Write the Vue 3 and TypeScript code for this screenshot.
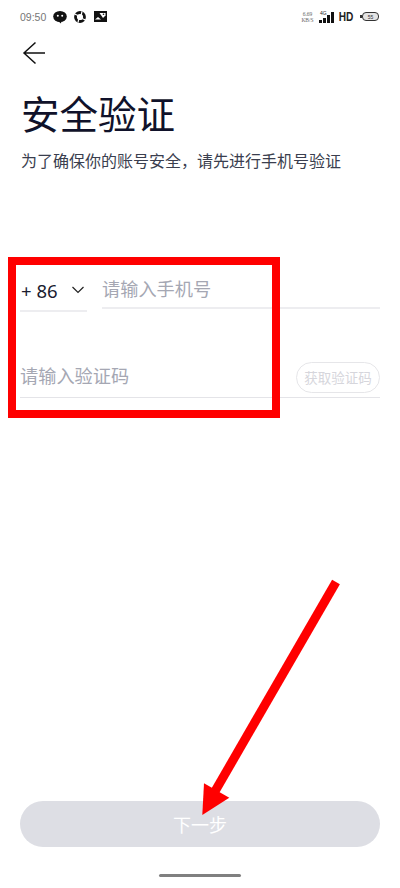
<script setup lang="ts">
const title = '安全验证'
const subtitle = '为了确保你的账号安全，请先进行手机号验证'
const bars = [3, 5, 8, 11]
</script>

<template>
  <div class="page">
    <div class="status-bar">
      <div class="status-left">
        <span class="time">09:50</span>
        <svg class="st-icon" width="14" height="14" viewBox="0 0 14 14">
          <ellipse cx="7" cy="6.5" rx="6.8" ry="5.6" fill="#111" />
          <path d="M5 11l3 2.600 .4-2.600z" fill="#111" />
          <circle cx="4.800" cy="5.800" r="1" fill="#fff" />
          <circle cx="9.200" cy="5.800" r="1" fill="#fff" />
        </svg>
        <svg class="st-icon disc" width="12" height="12" viewBox="0 0 12 12">
          <circle cx="6" cy="6" r="4.500" fill="none" stroke="#111" stroke-width="2.800" />
          <path d="M.5 3l3.500 1.500M8 .5L7.200 4M11.500 9L8 7.500M4 11.500L4.800 8" stroke="#fff" stroke-width="1.200" />
        </svg>
        <svg class="st-icon" width="13" height="11" viewBox="0 0 13 11">
          <rect width="13" height="11" fill="#111" />
          <path d="M1 8.500l3-2.500 3 2.500z" fill="#fff" />
          <path d="M5.500 2h6v2.500L9 7z" fill="#fff" />
          <circle cx="9.500" cy="3.200" r=".8" fill="#111" />
        </svg>
      </div>
      <div class="status-right">
        <span class="speed"><i>6.69</i><i>KB/S</i></span>
        <span class="signal">
          <small>4G</small>
          <b v-for="h in bars" :key="h" :style="{ height: `${h}px` }"></b>
        </span>
        <span class="hd">HD</span>
        <span class="battery"><em>55</em></span>
      </div>
    </div>

    <button class="back" type="button" aria-label="返回">
      <svg width="24" height="24" viewBox="0 0 24 24" fill="none" stroke="#111" stroke-width="1.500">
        <path d="M23 12H2M13.500 1.500L2 12l11.500 10.500" />
      </svg>
    </button>

    <h1 class="title">{{ title }}</h1>
    <p class="subtitle">{{ subtitle }}</p>

    <div class="form">
      <div class="phone-row">
        <div class="code-select">
          <span>+ 86</span>
          <svg width="14" height="8" viewBox="0 0 14 8" fill="none" stroke="#222" stroke-width="1.200">
            <path d="M1.500 1l5.500 5.500L12.500 1" />
          </svg>
        </div>
        <div class="field">请输入手机号</div>
      </div>
      <div class="sms-row">
        <span class="field-text">请输入验证码</span>
        <span class="sms-btn">获取验证码</span>
      </div>
    </div>

    <button class="next" type="button">下一步</button>
    <div class="home-bar"></div>

    <div class="mark-box"></div>
    <svg class="mark-arrow" width="400" height="888" viewBox="0 0 400 888">
      <path d="M336 582L214 793" stroke="#f00" stroke-width="9" fill="none" />
      <path d="M202.300 815L204 783.300L229.300 797.700z" fill="#f00" />
    </svg>
  </div>
</template>

<style scoped>
.page {
  position: relative;
  width: 400px;
  height: 888px;
  overflow: hidden;
  box-sizing: border-box;
  display: flex;
  flex-direction: column;
  background: #fff;
  font-family: "Noto Sans CJK SC", "Liberation Sans", sans-serif;
}

.status-bar {
  height: 32px;
  padding: 1px 21px 0 20px;
  box-sizing: border-box;
  display: flex;
  align-items: center;
  justify-content: space-between;
}

.status-left {
  display: flex;
  align-items: center;
}

.time {
  font-family: "Liberation Sans", sans-serif;
  font-size: 10.500px;
  color: #777;
  margin-right: 7px;
}

.st-icon {
  margin-right: 7px;
}

.st-icon.disc {
  margin-right: 8px;
}

.status-right {
  display: flex;
  align-items: center;
  gap: 6px;
}

.speed {
  display: flex;
  flex-direction: column;
  align-items: center;
  width: 11px;
  font-family: "Liberation Serif", serif;
  font-size: 5.500px;
  line-height: 6px;
  white-space: nowrap;
  color: #666;
}

.speed i {
  font-style: normal;
}

.signal {
  position: relative;
  display: flex;
  align-items: flex-end;
  gap: 1px;
  height: 11px;
  margin-top: 1px;
}

.signal small {
  position: absolute;
  left: 1px;
  top: -2px;
  font-size: 5px;
  line-height: 6px;
  color: #222;
  font-family: "Liberation Sans", sans-serif;
}

.signal b {
  width: 3px;
  background: #111;
}

.hd {
  width: 12px;
  margin-right: 4px;
  display: flex;
  justify-content: center;
  font-family: "Liberation Sans", sans-serif;
  font-size: 13px;
  font-weight: 700;
  color: #222;
  transform: scaleX(0.78);
}

.battery {
  position: relative;
  width: 17px;
  height: 9px;
  box-sizing: border-box;
  border: 1px solid #333;
  border-radius: 4px;
  background: #e4e4e4;
  display: flex;
  align-items: center;
  justify-content: center;
}

.battery::before {
  content: "";
  position: absolute;
  left: -3px;
  top: 2px;
  width: 2px;
  height: 3px;
  background: #333;
}

.battery em {
  font-style: normal;
  font-size: 5px;
  color: #333;
  font-family: "Liberation Sans", sans-serif;
}

.back {
  align-self: flex-start;
  margin: 9px 0 0 22px;
  padding: 0;
  width: 24px;
  height: 24px;
  border: none;
  background: none;
  display: block;
}

.title {
  margin: 21px 0 0 21px;
  font-size: 38.500px;
  line-height: 52px;
  font-weight: 400;
  color: #10122a;
}

.subtitle {
  margin: 10px 0 0 21px;
  font-size: 16px;
  line-height: 24px;
  color: #3a3e4e;
}

.form {
  margin: 98px 20px 0;
}

.phone-row {
  display: flex;
  gap: 15px;
}

.code-select {
  width: 67px;
  height: 42px;
  box-sizing: border-box;
  border-bottom: 2px solid #ededf0;
  display: flex;
  align-items: center;
  justify-content: space-between;
  padding: 0 2px 0 1px;
  color: #1a1c30;
  font-size: 18.500px;
  font-family: "Noto Sans", "Liberation Sans", sans-serif;
}

.field {
  flex: 1;
  height: 39px;
  box-sizing: border-box;
  border-bottom: 2px solid #ededf0;
  font-size: 18.200px;
  line-height: 37px;
  color: #a5a7b3;
}

.sms-row {
  margin-top: 45px;
  height: 41px;
  box-sizing: border-box;
  border-bottom: 1px solid #e4e4e8;
  display: flex;
  align-items: flex-start;
  justify-content: space-between;
}

.field-text {
  font-size: 18.200px;
  line-height: 28px;
  color: #a5a7b3;
  margin-top: 4px;
}

.sms-btn {
  width: 84px;
  height: 31px;
  margin-top: 5px;
  box-sizing: border-box;
  border: 1px solid #e6e6e9;
  border-radius: 16px;
  text-align: center;
  font-size: 13.500px;
  line-height: 29px;
  color: #d6d6dc;
}

.next {
  margin: auto 20px 0;
  height: 46px;
  border: none;
  border-radius: 23px;
  background: #dddee4;
  color: #fff;
  font-size: 18px;
  font-family: inherit;
  padding: 0;
}

.home-bar {
  align-self: center;
  width: 82px;
  height: 3px;
  border-radius: 2px;
  background: #808080;
  margin: 27px 0 11px;
}

.mark-box {
  position: absolute;
  left: 8px;
  top: 257px;
  width: 272px;
  height: 161px;
  box-sizing: border-box;
  border: 8px solid #f00;
}

.mark-arrow {
  position: absolute;
  left: 0;
  top: 0;
  pointer-events: none;
}
</style>
